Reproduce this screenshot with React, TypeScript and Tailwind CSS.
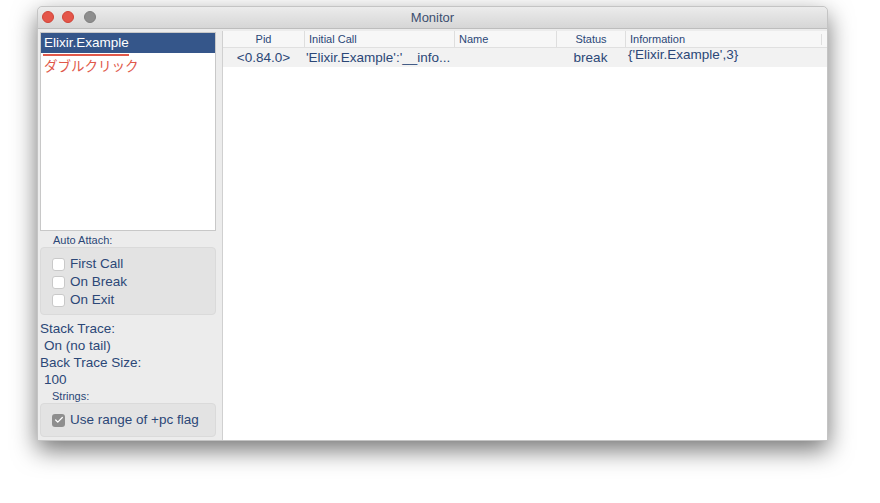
import { Check } from "lucide-react";

const ink = "text-[#2b4777]";

const Box = ({ checked, label }: { checked?: boolean; label: string }) => (
  <div className="flex items-center gap-[5px] h-[18px]">
    {checked ? (
      <span className="w-[13px] h-[13px] rounded-[3px] bg-[#8e8e8e] flex items-center justify-center">
        <Check className="w-[10px] h-[10px] text-white" strokeWidth={3} />
      </span>
    ) : (
      <span className="w-[13px] h-[13px] rounded-[3px] bg-white border border-[#c9c9c9]" />
    )}
    <span className={`text-[13.5px] ${ink}`}>{label}</span>
  </div>
);

const columns = [
  { label: "Pid", w: "w-[81px]", center: true },
  { label: "Initial Call", w: "w-[150px]" },
  { label: "Name", w: "w-[102px]" },
  { label: "Status", w: "w-[69px]", center: true },
  { label: "Information", w: "w-[196px]" },
];

export default function App() {
  return (
    <div
      className="w-[880px] h-[503px] bg-white pt-[6px] pl-[37px]"
      style={{ fontFamily: '"Liberation Sans", "Noto Sans CJK JP", sans-serif' }}
    >
      <div className="w-[791px] h-[435px] flex flex-col rounded-t-[5px] bg-[#ececec] border border-[#c4c4c4] shadow-[0_9px_24px_rgba(0,0,0,0.55)]">
        {/* title bar */}
        <div className="relative h-[22px] shrink-0 flex items-center justify-center rounded-t-[5px] bg-gradient-to-b from-[#ececec] to-[#d6d6d6] border-b border-[#bdbdbd]">
          <div className="absolute left-[4px] top-[4px] flex gap-[8px]">
            <span className="w-[12px] h-[12px] rounded-full bg-[#e4564a] border border-[#d04438]" />
            <span className="w-[12px] h-[12px] rounded-full bg-[#e4564a] border border-[#d04438]" />
            <span className="w-[12px] h-[12px] rounded-full bg-[#8e8e8e] border border-[#7f7f7f] ml-[2px]" />
          </div>
          <span className="text-[13px] text-[#3d4f70]">Monitor</span>
        </div>

        <div className="flex flex-1 min-h-0">
          {/* left panel */}
          <div className="w-[184px] shrink-0 flex flex-col pl-[2px] pr-[6px] pt-[3px]">
            <div className="h-[199px] bg-white border border-[#c8c8c8] flex flex-col">
              <div className="h-[20px] bg-[#35568a] text-white text-[13.5px] px-[3px] flex items-center">
                Elixir.Example
              </div>
              <div className="ml-[2px] mt-[1px] w-[86px] h-[2px] bg-[#e0584a]" />
              <div className="text-[13.5px] text-[#e0584a] px-[3px] mt-[2px] leading-[17px]">ダブルクリック</div>
            </div>
            <div className={`text-[11px] ${ink} pl-[13px] mt-[1px] h-[15px]`}>Auto Attach:</div>
            <div className="h-[68px] rounded-[4px] bg-[#e3e3e3] border border-[#dadada] pl-[11px] pt-[7px] flex flex-col">
              <Box label="First Call" />
              <Box label="On Break" />
              <Box label="On Exit" />
            </div>
            <div className={`text-[13.5px] ${ink} mt-[5px] leading-[17px]`}>
              <div>Stack Trace:</div>
              <div className="pl-[4px]">On (no tail)</div>
              <div>Back Trace Size:</div>
              <div className="pl-[4px]">100</div>
            </div>
            <div className={`text-[11px] ${ink} pl-[12px] h-[15px]`}>Strings:</div>
            <div className="h-[34px] rounded-[4px] bg-[#e3e3e3] border border-[#dadada] pl-[11px] flex items-center">
              <Box checked label="Use range of +pc flag" />
            </div>
          </div>

          {/* table */}
          <div className="flex-1 bg-white border-l border-[#d0d0d0] mt-[2px] flex flex-col">
            <div className="h-[17px] flex items-center bg-[#f7f7f7] border-b border-[#e0e0e0]">
              {columns.map((c, i) => (
                <div
                  key={c.label}
                  className={`${c.w} h-full flex items-center text-[11px] ${ink} ${
                    c.center ? "justify-center" : "pl-[4px]"
                  } ${i > 0 ? "border-l border-[#dedede]" : ""}`}
                >
                  {c.label}
                </div>
              ))}
              <div className="h-[11px] border-l border-[#dedede]" />
            </div>
            <div className={`h-[19px] flex bg-[#f2f2f2] text-[13.5px] ${ink}`}>
              <div className="w-[81px] flex items-center justify-center pt-[1px]">&lt;0.84.0&gt;</div>
              <div className="w-[252px] pl-[2px] flex items-center pt-[1px]">'Elixir.Example':'__info...</div>
              <div className="w-[69px] flex items-center justify-center pt-[2px]">break</div>
              <div className="flex-1 pl-[3px] leading-[13px]">{"{'Elixir.Example',3}"}</div>
            </div>
          </div>
        </div>
      </div>
    </div>
  );
}
